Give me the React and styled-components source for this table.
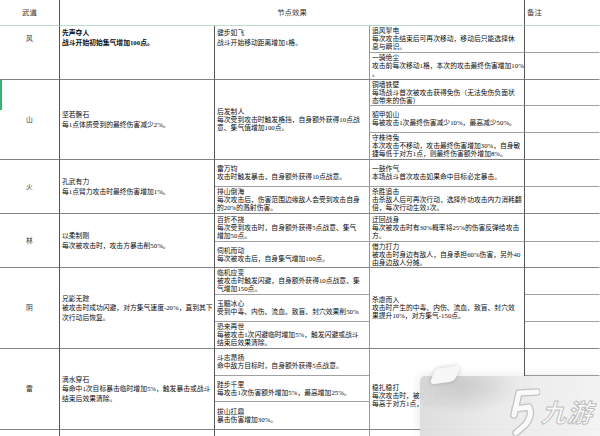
import React from 'react';
import styled, { createGlobalStyle } from 'styled-components';

const GlobalStyle = createGlobalStyle`
  html, body { margin: 0; padding: 0; background: #fff; overflow: hidden; }
  body { width: 600px; height: 436px; font-family: "Liberation Serif", "Noto Sans CJK SC", serif; }
`;

const Page = styled.div`
  position: relative;
  width: 600px;
  height: 436px;
  overflow: hidden;
  background: #fff;
`;

const Table = styled.div`
  display: grid;
  grid-template-columns: 60px 155px 155px 155px 75px;
  grid-template-rows: 26px 27px 27px 26px 27px 27px 27px 27px 28px 26px 27px 27px 27px 27px 26px 28px 30px;
`;

const rightColors = { 1: '#555', 2: '#555', 3: '#969696', 4: '#555', 5: 'transparent' };

const Cell = styled.div`
  position: relative;
  grid-column: ${p => p.$col} / span ${p => p.$colSpan};
  grid-row: ${p => p.$row} / span ${p => p.$rowSpan};
  box-sizing: border-box;
  border-right: 1px solid ${p => rightColors[p.$col + p.$colSpan - 1]};
  border-bottom: 1px solid ${p => (p.$head ? '#bcdccd' : p.$major ? '#828282' : '#a0a0a0')};
  display: flex;
  flex-direction: column;
  justify-content: ${p => (p.$top ? 'flex-start' : 'center')};
  align-items: ${p => (p.$center ? 'center' : 'flex-start')};
  padding: ${p => p.$padTop || 0}px 2px 0 2px;
  font-family: "Liberation Serif", "Noto Sans CJK SC", serif;
  font-size: ${p => (p.$head ? '7.4px' : '6.8px')};
  line-height: ${p => (p.$loose ? '9.6px' : '8px')};
  font-weight: ${p => (p.$bold ? 700 : 400)};
  color: ${p => (p.$muted ? '#333' : '#0d0d0d')};
  white-space: nowrap;
  overflow: hidden;
`;

const Line = styled.span`
  display: block;
`;

const SelectMark = styled.span`
  position: absolute;
  left: 0;
  top: 0;
  width: 2px;
  height: 30px;
  background: #34b36f;
`;

const Watermark = styled.div`
  position: absolute;
  left: 420px;
  top: 376px;
  width: 180px;
  height: 60px;
  border-radius: 5px 0 0 0;
  background:
    radial-gradient(ellipse 60px 28px at 40px 10px, rgba(200,200,200,0.9), rgba(200,200,200,0) 100%),
    linear-gradient(100deg, rgba(220,220,220,0.97) 0%, rgba(234,234,234,0.97) 45%, rgba(243,243,243,0.96) 100%);
  box-shadow: -2px -2px 8px rgba(0,0,0,0.07);
`;

const Tab = styled.div`
  position: absolute;
  left: 433px;
  top: 367px;
  width: 24px;
  height: 16px;
  border-radius: 5px;
  background: #f7f7f7;
  transform: skewX(-28deg) rotate(-8deg);
  box-shadow: 0 0 5px rgba(0,0,0,0.2);
`;

const Logo = styled.div`
  position: absolute;
  left: 506px;
  top: 388px;
  width: 110px;
  display: flex;
  flex-wrap: nowrap;
  align-items: flex-start;
  gap: 4px;
`;

const LogoText = styled.span`
  display: inline-block;
  flex-shrink: 0;
  white-space: nowrap;
  font-family: "Noto Sans CJK SC", sans-serif;
  font-size: 25px;
  line-height: 40px;
  font-weight: 700;
  letter-spacing: 1px;
  color: #fbfbfb;
  -webkit-text-stroke: 1px #bdbdbd;
  transform: skewX(-16deg);
  margin-top: 3px;
`;

const LogoMarkSvg = styled.svg`
  flex-shrink: 0;
`;

const LogoMark = () => (
  <LogoMarkSvg width="34" height="48" viewBox="0 0 34 48">
    <g fill="none" strokeLinejoin="round" strokeLinecap="round">
      <path d="M13 5 L31 4 M13 5 L8 27 M9 21 L23 19 Q27 26 20 36 L10 45" stroke="#c2c2c2" strokeWidth="7.5" />
      <path d="M13 5 L31 4 M13 5 L8 27 M9 21 L23 19 Q27 26 20 36 L10 45" stroke="#fafafa" strokeWidth="5" />
    </g>
  </LogoMarkSvg>
);

const majorEnds = new Set([3, 6, 8, 10, 13, 16]);

const cells = [
  { c: 1, r: 1, head: true, center: true, muted: true, lines: ['武道'] },
  { c: 2, r: 1, cs: 3, head: true, center: true, muted: true, lines: ['节点效果'] },
  { c: 5, r: 1, head: true, muted: true, lines: ['备注'] },

  { c: 1, r: 2, rs: 2, center: true, top: true, pad: 9, muted: true, lines: ['风'] },
  { c: 2, r: 2, rs: 2, top: true, pad: 2, bold: true, loose: true, lines: ['先声夺人', '战斗开始初始集气增加100点。'] },
  { c: 3, r: 2, rs: 2, top: true, pad: 2, loose: true, lines: ['健步如飞', '战斗开始移动距离增加1格。'] },
  { c: 4, r: 2, lines: ['追风掣电', '每次攻击结束后可再次移动，移动后只能选择休', '息与瞬识。'] },
  { c: 4, r: 3, lines: ['一骑绝尘', '攻击前每次移动1格，本次的攻击最终伤害增加10%', '。'] },
  { c: 5, r: 2 }, { c: 5, r: 3 },

  { c: 1, r: 4, rs: 3, center: true, muted: true, mark: true, lines: ['山'] },
  { c: 2, r: 4, rs: 3, loose: true, lines: ['坚若磐石', '每1点体质受到的最终伤害减少2%。'] },
  { c: 3, r: 4, rs: 3, lines: ['后发制人', '每次受到攻击时触发格挡，自身额外获得10点战', '意、集气值增加100点。'] },
  { c: 4, r: 4, lines: ['铜墙铁壁', '每场战斗首次被攻击获得免伤（无法免伤负面状', '态带来的伤害）'] },
  { c: 4, r: 5, lines: ['貂甲如山', '每被攻击1次最终伤害减少10%，最高减少50%。'] },
  { c: 4, r: 6, lines: ['守株待兔', '本次攻击不移动，攻击最终伤害增加30%，自身敏', '捷每低于对方1点，则最终伤害额外增加8%。'] },
  { c: 5, r: 4 }, { c: 5, r: 5 }, { c: 5, r: 6 },

  { c: 1, r: 7, rs: 2, center: true, muted: true, lines: ['火'] },
  { c: 2, r: 7, rs: 2, loose: true, lines: ['孔武有力', '每1点臂力攻击时最终伤害增加1%。'] },
  { c: 3, r: 7, lines: ['雷万钧', '攻击时触发暴击，自身额外获得10点战意。'] },
  { c: 3, r: 8, lines: ['排山倒海', '每次攻击后，伤害范围边缘敌人会受到攻击自身', '的20%的溅射伤害。'] },
  { c: 4, r: 7, lines: ['一鼓作气', '本场战斗首次攻击如果命中目标必定暴击。'] },
  { c: 4, r: 8, lines: ['杀胜追击', '击杀敌人后可再次行动，选择外功攻击内力消耗翻', '倍，每次行动生效1次。'] },
  { c: 5, r: 7 }, { c: 5, r: 8 },

  { c: 1, r: 9, rs: 2, center: true, muted: true, lines: ['林'] },
  { c: 2, r: 9, rs: 2, loose: true, lines: ['以柔制刚', '每次被攻击时，攻击方暴击削50%。'] },
  { c: 3, r: 9, lines: ['百折不挠', '每次受到攻击时，自身额外获得5点战意、集气', '增加50点。'] },
  { c: 3, r: 10, lines: ['伺机而动', '每次被攻击后，自身集气增加100点。'] },
  { c: 4, r: 9, lines: ['迂回战身', '每次被攻击时有30%概率将25%的伤害反弹给攻击', '方。'] },
  { c: 4, r: 10, lines: ['借力打力', '被攻击时身边有敌人，自身承担60%伤害，另外40', '由身边敌人分摊。'] },
  { c: 5, r: 9 }, { c: 5, r: 10 },

  { c: 1, r: 11, rs: 3, center: true, muted: true, lines: ['阴'] },
  { c: 2, r: 11, rs: 3, loose: true, lines: ['兄影无踪', '被攻击时成功闪避，对方集气速度-20%，直到其下', '次行动后恢复。'] },
  { c: 3, r: 11, lines: ['临机应变', '被攻击时触发闪避，自身额外获得10点战意、集', '气增加150点。'] },
  { c: 3, r: 12, lines: ['玉髓冰心', '受到中毒、内伤、流血、致盲、封穴效果削50%'] },
  { c: 3, r: 13, lines: ['恐来再世', '每被攻击1次闪避临时增加5%，触发闪避或战斗', '结束后效果清除。'] },
  { c: 4, r: 11, rs: 3, lines: ['杀虐而入', '攻击时产生的中毒、内伤、流血、致盲、封穴效', '果提升10%，对方集气-150点。'] },
  { c: 5, r: 11 }, { c: 5, r: 12 }, { c: 5, r: 13 },

  { c: 1, r: 14, rs: 3, center: true, muted: true, lines: ['雷'] },
  { c: 2, r: 14, rs: 3, loose: true, lines: ['滴水穿石', '每命中1次目标暴击临时增加5%，触发暴击或战斗', '结束后效果清除。'] },
  { c: 3, r: 14, lines: ['斗志昂扬', '命中敌方目标时，自身额外获得5点战意。'] },
  { c: 3, r: 15, lines: ['跬步千里', '每攻击1次伤害额外增加5%，最高增加25%。'] },
  { c: 3, r: 16, lines: ['拔山扛鼎', '暴击伤害增加30%。'] },
  { c: 4, r: 14, rs: 3, pad: 14, lines: ['稳扎稳打', '每次攻击时，被攻击目标身法值', '每高于对方1点，最终伤害增加1%。'] },
  { c: 5, r: 14 }, { c: 5, r: 15 }, { c: 5, r: 16 },

  { c: 1, r: 17 }, { c: 2, r: 17 }, { c: 3, r: 17 }, { c: 4, r: 17 }, { c: 5, r: 17 },
];

export default function App() {
  return (
    <Page>
      <GlobalStyle />
      <Table>
        {cells.map((d, i) => {
          const rs = d.rs || 1;
          const cs = d.cs || 1;
          return (
            <Cell
              key={i}
              $col={d.c}
              $row={d.r}
              $rowSpan={rs}
              $colSpan={cs}
              $head={d.head}
              $major={majorEnds.has(d.r + rs - 1)}
              $center={d.center}
              $top={d.top}
              $padTop={d.pad}
              $bold={d.bold}
              $loose={d.loose}
              $muted={d.muted}
            >
              {d.mark && <SelectMark />}
              {(d.lines || []).map((t, j) => (
                <Line key={j}>{t}</Line>
              ))}
            </Cell>
          );
        })}
      </Table>
      <Watermark />
      <Tab />
      <Logo>
        <LogoMark />
        <LogoText>九游</LogoText>
      </Logo>
    </Page>
  );
}
